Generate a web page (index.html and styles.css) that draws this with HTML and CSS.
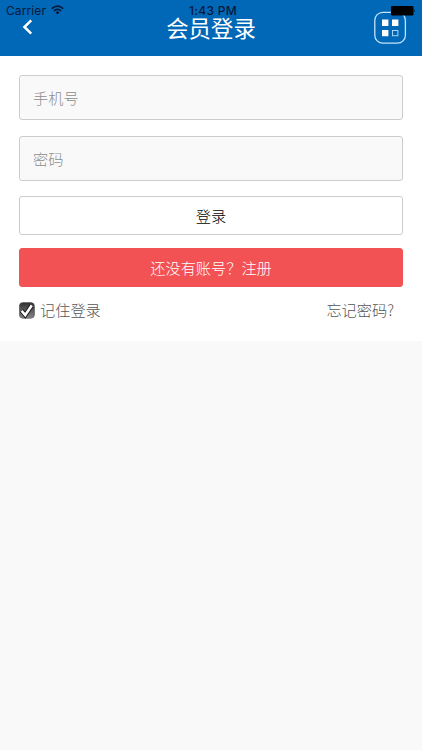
FILE: index.html
```html
<!DOCTYPE html>
<html lang="zh-CN">
<head>
<meta charset="utf-8">
<title>会员登录</title>
<link rel="stylesheet" href="styles.css">
</head>
<body>
<header class="header">
  <svg class="back" width="12" height="17" viewBox="0 0 12 17"><path d="M10.2 1.3L3.4 8L10.2 14.7" fill="none" stroke="#fff" stroke-width="2.5"/></svg>
  <h1 class="title">会员登录</h1>
  <svg class="menu" width="34" height="34" viewBox="0 0 34 34">
    <rect x="1.8" y="1.3" width="30.6" height="30.9" rx="8" fill="none" stroke="#c4e2f8" stroke-width="1.3"/>
    <path d="M9 8.5h6.4v6.4H9zM19 8.5h6.4v6.4H19zM9 19h6.4v6.2H9z" fill="#fff"/>
    <rect x="19.5" y="19.5" width="5.4" height="5.2" fill="none" stroke="#a9d3f1"/>
  </svg>
  <div class="status">
    <span class="carrier">Carrier</span>
    <svg class="wifi" width="13" height="10" viewBox="0 0 13 10"><g fill="none" stroke="#04183a" stroke-width="1.6"><path d="M.8 3.6Q6.5-1.2 12.2 3.6"/><path d="M2.9 5.9Q6.5 2.9 10.1 5.9"/></g><path d="M4.4 7.3Q6.5 5.7 8.6 7.3L6.5 9.5z" fill="#04183a"/></svg>
    <span class="time">1:43 PM</span>
    <svg class="battery" width="25" height="10" viewBox="0 0 25 10"><rect width="22.5" height="9.5" rx="1.2"/><path d="M23.3 3q1.4 1.8 0 3.6z"/></svg>
  </div>
</header>
<main class="panel">
  <input class="field" type="text" placeholder="手机号">
  <input class="field" type="password" placeholder="密码">
  <button class="btn login">登录</button>
  <button class="btn register">还没有账号？注册</button>
  <div class="options">
    <label class="remember">
      <svg class="check" width="16" height="17" viewBox="0 0 17 17" preserveAspectRatio="none">
        <defs><linearGradient id="g" x2="0" y2="1"><stop stop-color="#303030"/><stop offset="1" stop-color="#858585"/></linearGradient></defs>
        <rect x=".3" y=".5" width="16.2" height="15.8" rx="4" fill="url(#g)" stroke="#555" stroke-width=".6"/>
        <path d="M2.8 8.8L6.6 13L13.6 3.4" fill="none" stroke="#111" stroke-width="4.6"/>
        <path d="M2.8 8.8L6.6 13L13.6 3.4" fill="none" stroke="#fff" stroke-width="2.7"/>
      </svg>
      <span>记住登录</span>
    </label>
    <a class="forgot">忘记密码?</a>
  </div>
</main>
</body>
</html>
```
FILE: styles.css
```css
* { box-sizing: border-box; }
body {
  margin: 0;
  min-height: 750px;
  background: #f9f9f9;
  font-family: "Noto Sans CJK SC", sans-serif;
  font-size: 15.2px;
  font-weight: 300;
}
.header {
  position: relative;
  display: flex;
  justify-content: space-between;
  height: 56px;
  padding: 0 15px 0 21px;
  background: #0168b7;
}
.back { margin-top: 19px; }
.title {
  margin: 11px 0 0 16px;
  font-size: 22.4px;
  line-height: 33px;
  font-weight: 400;
  color: #fff;
}
.menu { margin-top: 11px; }
.status {
  position: absolute;
  inset: 0 0 auto 0;
  display: flex;
  height: 22px;
  font: 12px/22px Inter, sans-serif;
  color: #04183a;
}
.carrier { width: 51px; padding-left: 6px; letter-spacing: .1px; }
.wifi { margin-top: 5px; }
.time {
  position: absolute;
  left: 189px;
  font-weight: 500;
  letter-spacing: .3px;
  white-space: nowrap;
}
.battery { position: absolute; right: 6px; top: 6px; }
.panel {
  display: flex;
  flex-direction: column;
  height: 285px;
  padding: 19px 19px 0;
  background: #fff;
}
.field {
  height: 45px;
  margin: 0 0 16px;
  padding: 0 13px 2px;
  border: 1px solid #ccc;
  border-radius: 3px;
  background: #f9f9f9;
  font: inherit;
  color: #333;
}
.field + .field { margin-bottom: 15px; }
.field::placeholder { color: #8e8e8e; opacity: 1; }
.btn {
  height: 39px;
  padding: 0 0 2px;
  border: 1px solid #ccc;
  border-radius: 3px;
  background: #fff;
  font: inherit;
  color: #000;
}
.register {
  margin-top: 13px;
  border-color: #f05354;
  background: #f25254;
  color: #fff;
}
.options {
  display: flex;
  justify-content: space-between;
  align-items: center;
  height: 24px;
  margin-top: 10px;
  padding-right: 8px;
  color: #555;
}
.remember { display: flex; align-items: center; gap: 5px; }
.check { position: relative; top: 1px; }
.forgot { margin-right: 1px; }
```
